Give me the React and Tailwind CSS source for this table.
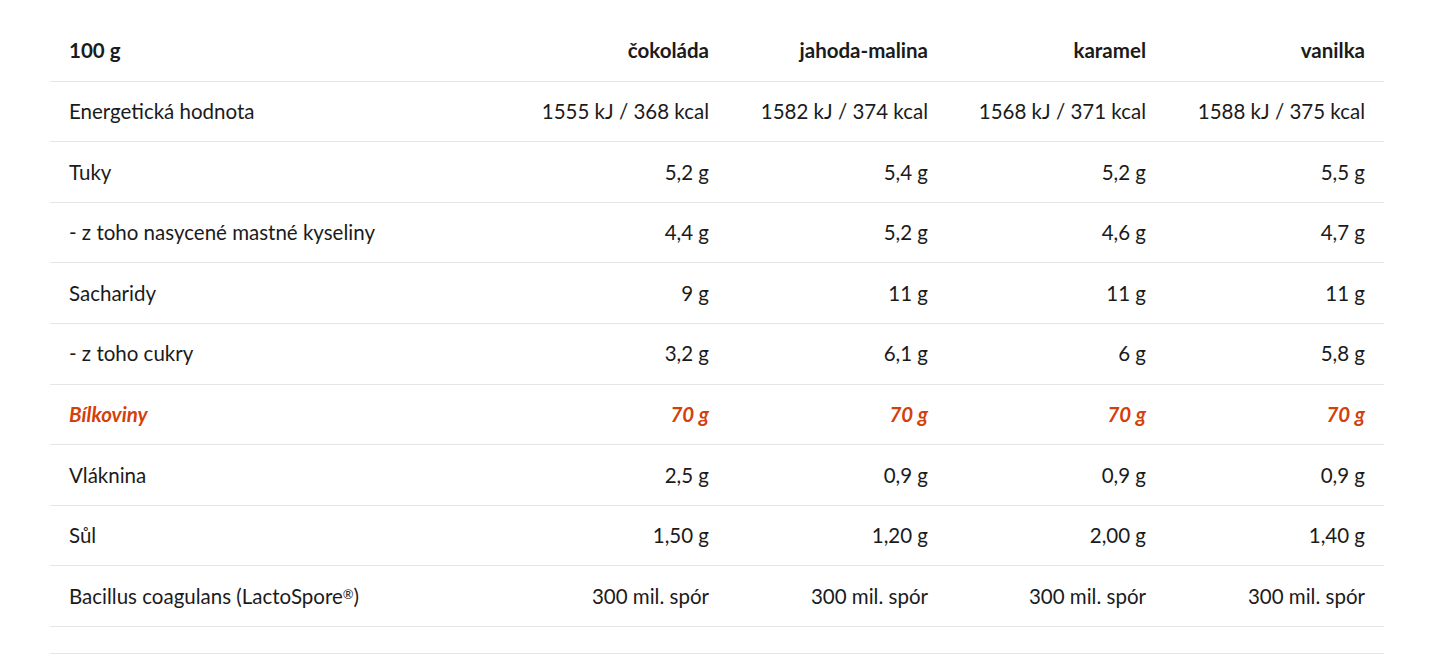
import React from 'react';

const flavours = ['čokoláda', 'jahoda-malina', 'karamel', 'vanilka'];

const rows = [
  { label: 'Energetická hodnota', values: ['1555 kJ / 368 kcal', '1582 kJ / 374 kcal', '1568 kJ / 371 kcal', '1588 kJ / 375 kcal'] },
  { label: 'Tuky', values: ['5,2 g', '5,4 g', '5,2 g', '5,5 g'] },
  { label: '- z toho nasycené mastné kyseliny', values: ['4,4 g', '5,2 g', '4,6 g', '4,7 g'] },
  { label: 'Sacharidy', values: ['9 g', '11 g', '11 g', '11 g'] },
  { label: '- z toho cukry', values: ['3,2 g', '6,1 g', '6 g', '5,8 g'] },
  { label: 'Bílkoviny', values: ['70 g', '70 g', '70 g', '70 g'], highlight: true },
  { label: 'Vláknina', values: ['2,5 g', '0,9 g', '0,9 g', '0,9 g'] },
  { label: 'Sůl', values: ['1,50 g', '1,20 g', '2,00 g', '1,40 g'] },
  {
    label: (
      <>
        Bacillus coagulans (LactoSpore<span className="text-[13px] align-[5px]">®</span>)
      </>
    ),
    key: 'bacillus',
    values: ['300 mil. spór', '300 mil. spór', '300 mil. spór', '300 mil. spór'],
  },
];

const grid = 'grid grid-cols-[459px_219px_219px_218px_219px]';

export default function App() {
  return (
    <div className="min-h-screen bg-white pt-[21px] px-[50px] text-[#1b1b1b] font-['Lato',sans-serif] text-[20.5px]">
      <div className="w-[1334px]">
        <div className={`${grid} h-[60.6px] items-center border-b border-[#e6e6e6] font-bold`}>
          <div className="pl-[19px]">100 g</div>
          {flavours.map((f) => (
            <div key={f} className="text-right pr-[19px]">{f}</div>
          ))}
        </div>
        {rows.map((r) => (
          <div
            key={r.key || r.label}
            className={`${grid} h-[60.6px] items-center border-b border-[#e6e6e6] ${r.highlight ? 'text-[#d4400a] font-bold italic' : ''}`}
          >
            <div className="pl-[19px]">{r.label}</div>
            {r.values.map((v, i) => (
              <div key={i} className="text-right pr-[19px]">{v}</div>
            ))}
          </div>
        ))}
        <div className="h-[27px] border-b border-[#e6e6e6]" />
      </div>
    </div>
  );
}
